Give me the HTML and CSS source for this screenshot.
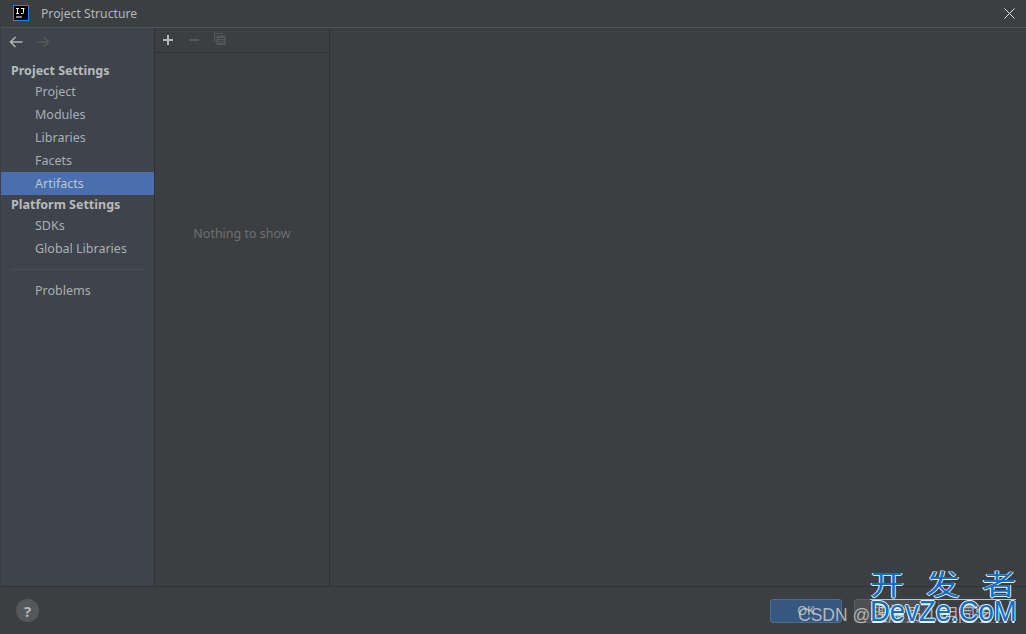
FILE: index.html
```html
<!DOCTYPE html>
<html lang="en">
<head>
<meta charset="utf-8">
<title>Project Structure</title>
<link rel="stylesheet" href="styles.css">
</head>
<body>
<div class="dialog">
  <header class="titlebar">
    <svg class="logo" width="16" height="16" viewBox="0 0 16 16">
      <rect x="0.5" y="0.5" width="15" height="15" fill="#000" stroke="#1e88f0"/>
      <path d="M3 3.500h3M4.500 3.500v5M3 8.500h3M8 3.500h3.500M10.500 3.500v4.200q0 .8-.8.8H8" fill="none" stroke="#fff" stroke-width="1"/>
      <rect x="3" y="11.500" width="6" height="1" fill="#fff"/>
    </svg>
    <span class="title">Project Structure</span>
    <svg class="close" width="11" height="11" viewBox="0 0 11 11">
      <path d="M.5.500l10 10M10.500.500l-10 10" stroke="#e4e4e4" stroke-width="1"/>
    </svg>
  </header>
  <div class="main">
    <nav class="sidebar">
      <div class="nav-arrows">
        <svg width="14" height="12" viewBox="0 0 14 12"><path d="M13.500 6H1.500M6.500 1l-5 5 5 5" fill="none" stroke="#afb1b3" stroke-width="1.600"/></svg>
        <svg width="14" height="12" viewBox="0 0 14 12"><path d="M.5 6h12M7.500 1l5 5-5 5" fill="none" stroke="#55585a" stroke-width="1.600"/></svg>
      </div>
      <div class="group first">Project Settings</div>
      <div class="item">Project</div>
      <div class="item">Modules</div>
      <div class="item">Libraries</div>
      <div class="item">Facets</div>
      <div class="item active">Artifacts</div>
      <div class="group">Platform Settings</div>
      <div class="item">SDKs</div>
      <div class="item">Global Libraries</div>
      <div class="sep"></div>
      <div class="item">Problems</div>
    </nav>
    <section class="list">
      <div class="toolbar">
        <svg width="12" height="12" viewBox="0 0 12 12"><path d="M6 1v10M1 6h10" stroke="#b4b6b8" stroke-width="2"/></svg>
        <svg width="12" height="12" viewBox="0 0 12 12"><path d="M1 6h10" stroke="#55585a" stroke-width="2"/></svg>
        <svg width="14" height="14" viewBox="1 1 14 14"><path d="M1.500 10V1.500H10" fill="none" stroke="#55585a" stroke-width="1.200"/><path d="M3.500 3.500h9v9.500h-9z" fill="#55585a"/><path d="M5 6.500h6M5 8.500h6M5 10.500h6" stroke="#3c3f41"/></svg>
      </div>
      <div class="empty">Nothing to show</div>
    </section>
    <section class="detail"></section>
  </div>
  <footer class="footer">
    <div class="help">?</div>
    <div class="buttons">
      <div class="btn primary">OK</div>
      <div class="btn">取消</div>
      <div class="btn disabled">应用</div>
    </div>
  </footer>
</div>
<div class="csdn">CSDN @程序员小明同学</div>
<div class="watermark">
  <div class="wm-cn"><span>开</span><span>发</span><span>者</span></div>
  <div class="wm-en">DevZe.CoM</div>
</div>
</body>
</html>
```
FILE: styles.css
```css
* { box-sizing: border-box; }
html, body { margin: 0; height: 100%; }
body { background: #3c3f41; overflow: hidden; font-family: "Noto Sans", "Noto Sans CJK SC", sans-serif; font-size: 13px; color: #bbbbbb; }
.dialog { width: 1026px; height: 634px; display: flex; flex-direction: column; padding-left: 1px; position: relative; }
.titlebar { height: 28px; flex: none; display: flex; align-items: center; padding: 0 11px 1px 12px; border-bottom: 1px solid #515456; background: #3c3f41; }
.logo { flex: none; margin-right: 12px; }
.title { color: #b4b6b8; font-size: 12.200px; }
.close { margin-left: auto; }
.main { flex: 1; display: flex; min-height: 0; }
.sidebar { width: 154px; flex: none; background: #3e434c; border-right: 1px solid #323232; }
.nav-arrows { height: 28px; display: flex; align-items: center; gap: 13px; padding-left: 8px; }
.group { height: 19px; line-height: 19px; padding-left: 10px; font-weight: 700; font-size: 12.500px; color: #b8babb; }
.group.first { margin-top: 5px; }
.item { height: 23px; line-height: 24px; padding-left: 34px; color: #a9b0b4; font-size: 12.500px; }
.item.active { background: #4b6eaf; color: #bcc5d2; }
.sep { height: 1px; margin: 9px 10px 9px 10px; background: #4c4f52; }
.list { width: 175px; flex: none; display: flex; flex-direction: column; border-right: 1px solid #323232; }
.toolbar { height: 25px; flex: none; display: flex; align-items: center; gap: 14px; padding: 0 0 0 7px; border-bottom: 1px solid #323232; }
.empty { flex: 1; text-align: center; color: #6c6f71; font-size: 12.500px; padding-top: 172px; }
.detail { flex: 1; }
.footer { height: 48px; flex: none; display: flex; align-items: center; justify-content: space-between; border-top: 1px solid #323232; padding: 0 16px 0 15px; }
.help { width: 23px; height: 23px; border-radius: 50%; background: #54585a; color: #b4b6b8; font-weight: 700; font-size: 15px; display: flex; align-items: center; justify-content: center; }
.buttons { display: flex; gap: 12px; }
.btn { width: 72px; height: 24px; line-height: 22px; border: 1px solid #5e6060; border-radius: 3px; background: #4c5052; color: #a9abad; text-align: center; font-size: 12.500px; }
.btn.primary { background: #365880; border-color: #4c708c; color: #bbbbbb; }
.btn.disabled { background: transparent; color: #777a7c; }
.csdn { position: absolute; left: 798px; top: 605px; font-family: "Liberation Sans", "Noto Sans CJK SC", sans-serif; font-size: 17.500px; line-height: 20px; color: rgba(215, 215, 215, .75); white-space: nowrap; }
.watermark { position: absolute; left: 870px; top: 568px; width: 146px; color: #0f6fc6; text-shadow: -1px 0 #e6f2fb, 1px 0 #e6f2fb, 0 -1px #e6f2fb, 0 1px #e6f2fb; }
.wm-cn { display: flex; justify-content: space-between; height: 32px; border-bottom: 1px solid #9fd0ee; font-family: "Noto Sans CJK SC", sans-serif; font-size: 34px; line-height: 32px; }
.wm-cn span { display: block; transform: scaleY(.82); }
.wm-en { font-family: "Liberation Sans", sans-serif; font-size: 27.500px; line-height: 24px; white-space: nowrap; transform: scaleY(1.05); }
```
